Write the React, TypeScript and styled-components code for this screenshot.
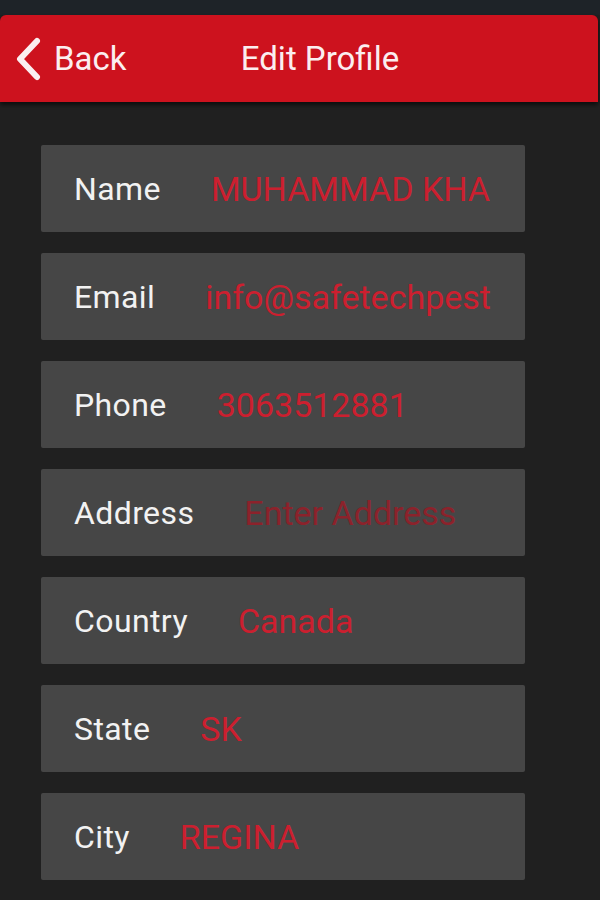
import styled, { createGlobalStyle } from "styled-components";

const GlobalStyle = createGlobalStyle`
  html, body {
    margin: 0;
    padding: 0;
    background: #202020;
  }
  body {
    font-family: Roboto, "Liberation Sans", sans-serif;
  }
`;

const Screen = styled.div`
  width: 600px;
  height: 900px;
  overflow: hidden;
  background: #202020;
  display: flex;
  flex-direction: column;
`;

const StatusStrip = styled.div`
  height: 15px;
  background: #1e2328;
`;

const Header = styled.header`
  height: 87px;
  margin-right: 2px;
  background: #cd121e;
  border-radius: 6px 6px 0 0;
  box-shadow: 0 3px 4px rgba(0, 0, 0, 0.6);
  position: relative;
  display: flex;
  align-items: center;
  justify-content: center;
`;

const BackButton = styled.button`
  position: absolute;
  left: 14px;
  top: 50%;
  transform: translateY(-50%);
  display: flex;
  align-items: center;
  gap: 12px;
  border: 0;
  padding: 0;
  background: none;
  color: #fbeef0;
  font-family: Roboto, "Liberation Sans", sans-serif;
  font-size: 33px;
  cursor: pointer;
`;

const Title = styled.h1`
  margin: 0 0 0 42px;
  font-weight: 400;
  font-size: 33px;
  color: #fbeef0;
`;

const Form = styled.div`
  display: flex;
  flex-direction: column;
  gap: 21px;
  padding: 43px 75px 0 41px;
`;

const Row = styled.label`
  height: 87px;
  background: #464646;
  border-radius: 2px;
  display: flex;
  align-items: center;
  padding: 0 33px 0 33px;
  box-sizing: border-box;
`;

const FieldName = styled.span`
  color: #f2f2f2;
  font-size: 32px;
  letter-spacing: 0.4px;
  margin-right: 50px;
  white-space: nowrap;
`;

const FieldInput = styled.input`
  flex: 1;
  min-width: 0;
  border: 0;
  outline: none;
  background: transparent;
  padding: 0;
  color: #cc1f2f;
  font-family: Roboto, "Liberation Sans", sans-serif;
  font-size: 34px;
  &::placeholder {
    color: #8c222b;
  }
`;

const Chevron = () => (
  <svg width="28" height="44" viewBox="0 0 28 44">
    <path
      d="M23 4 L6 22 L23 40"
      fill="none"
      stroke="#fbeef0"
      strokeWidth="6"
      strokeLinecap="round"
      strokeLinejoin="round"
    />
  </svg>
);

const fields = [
  { label: "Name", value: "MUHAMMAD KHAN" },
  { label: "Email", value: "info@safetechpest.ca" },
  { label: "Phone", value: "3063512881" },
  { label: "Address", value: "", placeholder: "Enter Address" },
  { label: "Country", value: "Canada" },
  { label: "State", value: "SK" },
  { label: "City", value: "REGINA" },
];

export default function App() {
  return (
    <>
      <GlobalStyle />
      <Screen>
        <StatusStrip />
        <Header>
          <BackButton>
            <Chevron />
            Back
          </BackButton>
          <Title>Edit Profile</Title>
        </Header>
        <Form>
          {fields.map((f) => (
            <Row key={f.label}>
              <FieldName>{f.label}</FieldName>
              <FieldInput defaultValue={f.value} placeholder={f.placeholder} />
            </Row>
          ))}
        </Form>
      </Screen>
    </>
  );
}
